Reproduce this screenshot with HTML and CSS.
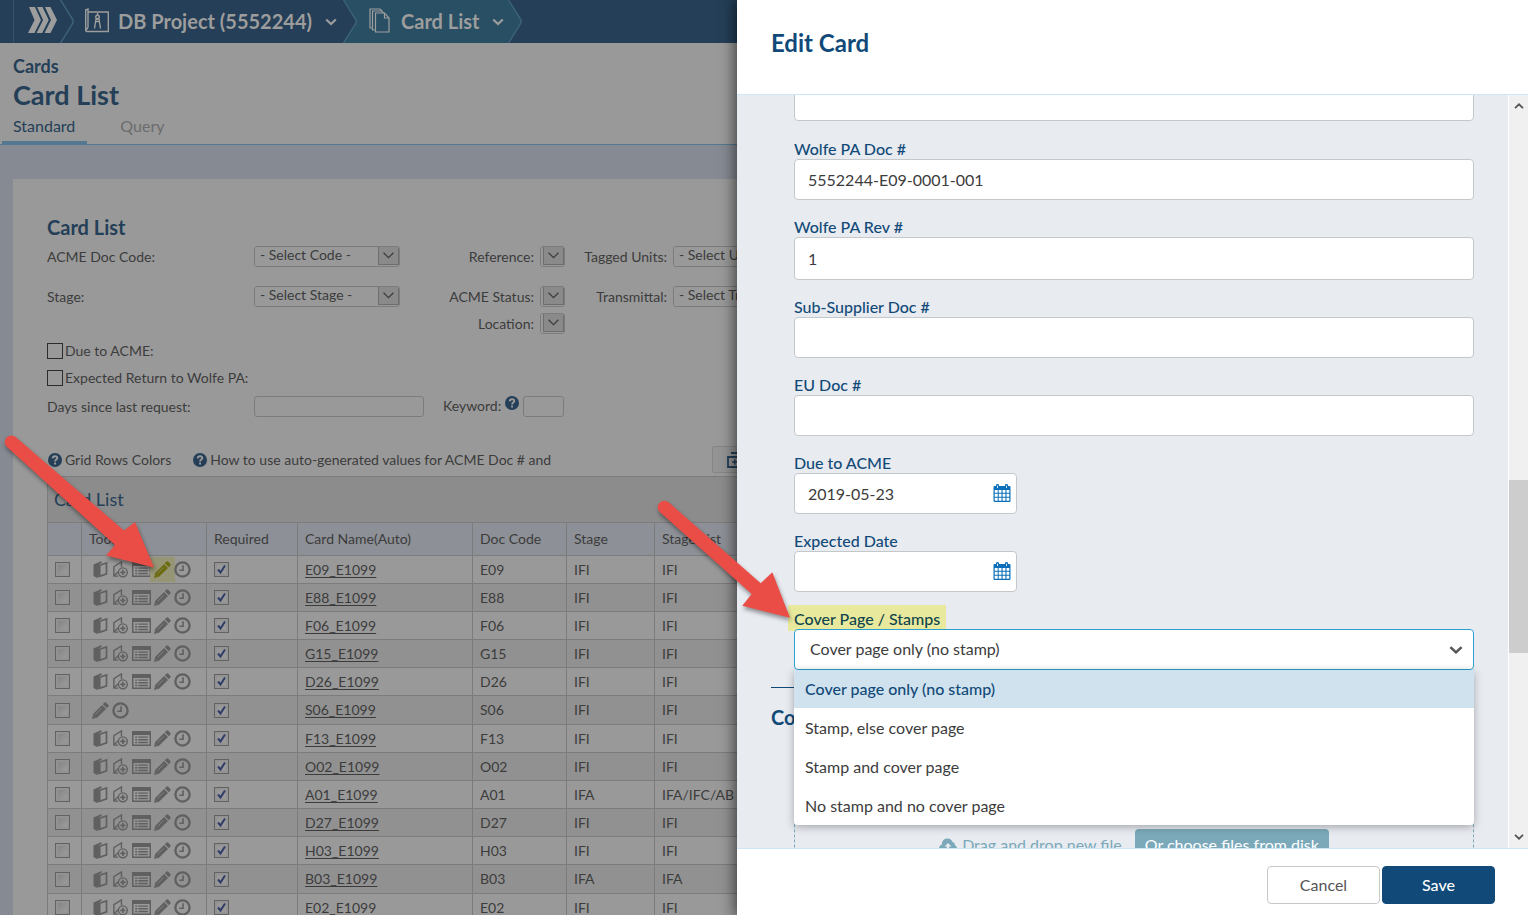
FILE: index.html
```html
<!DOCTYPE html>
<html lang="en">
<head>
<meta charset="utf-8">
<title>Card List</title>
<link rel="stylesheet" href="styles.css">
</head>
<body>
<svg class="symbols" aria-hidden="true">
  <symbol id="i-book" viewBox="0 0 16 17"><path fill="currentColor" d="M1 3.500 9 0v2L6.500 3.200v12.300L4.500 17 1 15z"/><path fill="none" stroke="currentColor" stroke-width="1.700" d="M7.200 4.200 14 2v10.800L7.200 15.300z"/></symbol>
  <symbol id="i-map" viewBox="0 0 17 18"><path fill="none" stroke="currentColor" stroke-width="1.500" d="M6 16H1.500V6L9.500 1v5.500M1.500 16 6 11.500"/><circle cx="11" cy="12" r="4.700" fill="none" stroke="currentColor" stroke-width="1.500"/><path stroke="currentColor" stroke-width="1.700" d="M11 9.300v5.400M8.300 12h5.400"/></symbol>
  <symbol id="i-list" viewBox="0 0 18 14"><path fill="none" stroke="currentColor" stroke-width="1.400" d="M.7.7h16.600v12.600H.7z"/><path fill="currentColor" d="M0 0h18v3.700H0zM3 5h2v1.400H3zm3 0h9v1.400H6zM3 7.500h2v1.400H3zm3 0h9v1.400H6zM3 10h2v1.400H3zm3 0h9v1.400H6z"/></symbol>
  <symbol id="i-pencil" viewBox="0 0 16 16"><path fill="currentColor" d="M11.500.8q1-1 2 0l1.700 1.700q1 1 0 2L13.900 5.800 10.200 2.100zM9.500 2.800l3.700 3.700-8.500 8.400L0 16l1.100-4.800z"/><path stroke="#999" stroke-width=".5" d="M3.300 11.800 9 6M1.600 13.600l.9.900" fill="none"/></symbol>
  <symbol id="i-clock" viewBox="0 0 16 16"><circle cx="8" cy="8" r="6.700" fill="none" stroke="currentColor" stroke-width="2.200"/><path fill="none" stroke="currentColor" stroke-width="1.500" d="M8.500 4v4.700H5"/></symbol>
  <symbol id="i-help" viewBox="0 0 14 14"><circle cx="7" cy="7" r="7" fill="currentColor"/><path fill="none" stroke="#999" stroke-width="1.900" d="M4.700 5.400C4.800 2.500 9.300 2.600 9.300 5c0 1.500-2.200 1.600-2.200 3.400"/><path fill="#999" d="M6.100 9.500H8v1.900H6.100z"/></symbol>
  <symbol id="i-caret" viewBox="0 0 12 8"><path fill="none" stroke="currentColor" stroke-width="2.200" d="M1.200 1.500 6 6l4.800-4.500"/></symbol>
  <symbol id="i-thin" viewBox="0 0 10 6"><path fill="none" stroke="currentColor" stroke-width="1.100" d="M.5.5 5 5 9.500.5"/></symbol>
  <symbol id="i-cal" viewBox="0 0 18 18"><path fill="#0b70b9" d="M1.500 2H3V1q0-1 1.500-1T6 1v1h6V1q0-1 1.500-1T15 1v1h1.500q1 0 1 1v14q0 1-1 1h-15q-1 0-1-1V3q0-1 1-1z"/><path fill="#fff" d="M1.700 6h3v2.800h-3zm4 0h2.800v2.800H5.700zm3.900 0h2.800v2.800H9.600zm3.900 0h2.800v2.800h-2.800zM1.700 9.800h3v2.900h-3zm4 0h2.800v2.900H5.700zm3.900 0h2.800v2.900H9.600zm3.900 0h2.800v2.900h-2.800zM1.700 13.700h3v3h-3zm4 0h2.800v3H5.700zm3.900 0h2.800v3H9.600zm3.900 0h2.800v3h-2.800z"/><path stroke="#fff" stroke-width=".8" d="M4.500 1.500v2.500M13.500 1.500v2.500"/></symbol>
  <symbol id="i-edge" viewBox="0 0 14 43"><path fill="none" stroke="#3c617a" stroke-width="1.500" d="M.5 0 13 20v3L.5 43"/></symbol>
</svg>

<div class="app">
  <main class="page">
    <nav class="crumbs" aria-label="Breadcrumb">
      <a class="home" href="#" aria-label="Home"><svg width="30" height="27" viewBox="0 0 30 27"><path fill="#9d9d9d" d="M1 0h6l6 13-6.500 13H0L6.500 13zM9 0h5.500l6.500 13-6.500 13h-6l6.500-13zM17 0h5.500L29 13l-6.500 13h-6l6.500-13z"/><path stroke="#243f57" stroke-width="1.200" fill="none" d="M8 0l6 13-6.500 13M15.500 0l6 13L15 26"/></svg></a>
      <a class="crumb project" href="#">
        <svg class="edge"><use href="#i-edge"/></svg>
        <svg class="crumb-icon" width="24" height="25" viewBox="0 0 24 25"><path fill="none" stroke="#9d9d9d" stroke-width="1.400" d="M3 19.500V1L.7 2v20.500q.3 1 1.500 1H23.300V4H3.500M3 19.500 1 22"/><g fill="none" stroke="#9d9d9d" stroke-width="1.400"><circle cx="12.500" cy="9" r="1.800"/><path d="M12.500 5v2.500M11 11 9.500 20.500M14 11l1.500 9.500M10 13.500h5M11 11h3"/></g></svg>
        <span>DB Project (5552244)</span>
        <svg class="caret"><use href="#i-caret"/></svg>
      </a>
      <a class="crumb current" href="#">
        <svg class="edge lead" viewBox="0 0 14 43"><path fill="#243f57" d="M0 0h.5L13 20v3L.5 43H0z"/><use href="#i-edge"/></svg>
        <svg class="crumb-icon" width="21" height="25" viewBox="0 0 21 25"><g fill="#284f64" stroke="#9d9d9d" stroke-width="1.200"><path d="M1 1h10l2 2v17H1z"/><path d="M3.500 3h9l3 3v16h-12z"/><path d="M6.500 5h9l4.500 5v14H6.500z"/><path fill="none" d="M15.500 5v5H20"/></g></svg>
        <span>Card List</span>
        <svg class="caret"><use href="#i-caret"/></svg>
        <svg class="edge tail" viewBox="0 0 14 43"><path fill="#284f64" d="M0 0h.5L13 20v3L.5 43H0z"/><use href="#i-edge"/></svg>
      </a>
    </nav>
    <header class="page-head">
      <p class="kicker">Cards</p>
      <h1>Card List</h1>
      <div class="tabs"><a class="tab active" href="#">Standard</a><a class="tab" href="#">Query</a></div>
    </header>
    <section class="panel">
      <h2>Card List</h2>
      <form class="filters">
        <label class="c1 r1" for="f-code">ACME Doc Code:</label>
        <span class="pick c2 r1"><select id="f-code"><option>- Select Code -</option></select><svg><use href="#i-thin"/></svg></span>
        <label class="c3 r1" for="f-ref">Reference:</label>
        <span class="pick tiny c4 r1"><select id="f-ref"></select><svg><use href="#i-thin"/></svg></span>
        <label class="c5 r1" for="f-units">Tagged Units:</label>
        <span class="pick c6 r1"><select id="f-units"><option>- Select Unit -</option></select><svg><use href="#i-thin"/></svg></span>
        <label class="c1 r2" for="f-stage">Stage:</label>
        <span class="pick c2 r2"><select id="f-stage"><option>- Select Stage -</option></select><svg><use href="#i-thin"/></svg></span>
        <label class="c3 r2" for="f-status">ACME Status:</label>
        <span class="pick tiny c4 r2"><select id="f-status"></select><svg><use href="#i-thin"/></svg></span>
        <label class="c5 r2" for="f-trans">Transmittal:</label>
        <span class="pick c6 r2"><select id="f-trans"><option>- Select Transmittal -</option></select><svg><use href="#i-thin"/></svg></span>
        <label class="c3 r3" for="f-loc">Location:</label>
        <span class="pick tiny c4 r3"><select id="f-loc"></select><svg><use href="#i-thin"/></svg></span>
        <label class="tick r4"><input type="checkbox">Due to ACME:</label>
        <label class="tick r5"><input type="checkbox">Expected Return to Wolfe PA:</label>
        <label class="c1 r6" for="f-days">Days since last request:</label>
        <input class="c2 r6" id="f-days" type="text">
        <span class="keyword r6"><label for="f-key">Keyword:</label><svg class="help"><use href="#i-help"/></svg><input id="f-key" type="text"></span>
      </form>
      <div class="links">
        <a href="#"><svg class="help"><use href="#i-help"/></svg>Grid Rows Colors</a>
        <a class="howto" href="#"><svg class="help"><use href="#i-help"/></svg>How to use auto-generated values for ACME Doc # and W</a>
        <button class="add" type="button" aria-label="Add cards"><svg width="18" height="18" viewBox="0 0 18 18"><path fill="none" stroke="#243f57" stroke-width="1.800" d="M4 2h11M1 6h15v10H1z"/><path stroke="#243f57" stroke-width="1.500" d="M5 11h5.500M7.800 8.200v5.500"/></svg></button>
      </div>
      <div class="grid">
        <h3>Card List</h3>
        <table>
          <colgroup><col class="w-check"><col class="w-tools"><col class="w-req"><col class="w-name"><col class="w-code"><col class="w-stage"><col class="w-list"></colgroup>
          <thead><tr><th></th><th>Tools</th><th>Required</th><th>Card Name(Auto)</th><th>Doc Code</th><th>Stage</th><th>Stage List</th></tr></thead>
          <tbody id="rows"></tbody>
        </table>
      </div>
    </section>
  </main>

  <aside class="drawer" aria-label="Edit Card">
    <header class="drawer-head"><h2>Edit Card</h2></header>
    <div class="drawer-body">
      <form class="fields">
        <div class="field first"><input type="text" aria-label="Reference"></div>
        <div class="field"><label for="doc">Wolfe PA Doc #</label><input id="doc" type="text" value="5552244-E09-0001-001"></div>
        <div class="field tall"><label for="rev">Wolfe PA Rev #</label><input id="rev" type="text" value="1"></div>
        <div class="field"><label for="sub">Sub-Supplier Doc #</label><input id="sub" type="text"></div>
        <div class="field"><label for="eu">EU Doc #</label><input id="eu" type="text"></div>
        <div class="field date"><label for="due">Due to ACME</label><span class="date-box"><input id="due" type="text" value="2019-05-23"><button type="button" aria-label="Pick date"><svg><use href="#i-cal"/></svg></button></span></div>
        <div class="field date"><label for="exp">Expected Date</label><span class="date-box"><input id="exp" type="text"><button type="button" aria-label="Pick date"><svg><use href="#i-cal"/></svg></button></span></div>
        <div class="field cover"><label for="cover">Cover Page / Stamps</label>
          <div class="combo">
            <select id="cover"><option>Cover page only (no stamp)</option></select>
            <svg class="combo-caret"><use href="#i-caret"/></svg>
            <ul class="menu" role="listbox">
              <li class="selected" role="option">Cover page only (no stamp)</li>
              <li role="option">Stamp, else cover page</li>
              <li role="option">Stamp and cover page</li>
              <li role="option">No stamp and no cover page</li>
            </ul>
          </div>
        </div>
        <h3 class="next-section">Co</h3>
        <div class="dropzone">
          <svg width="18" height="15" viewBox="0 0 18 15"><path fill="currentColor" fill-rule="evenodd" d="M4 14q-4-.5-4-4 0-2.500 2.800-3.500Q3 1 8 .5q4-.5 5.500 3.500 2.500 0 2.300 3Q18 8 18 10.500 17.500 14 14 14zM9 5 5.500 8.500h2.300V12h2.400V8.500h2.300z"/></svg>
          <span>Drag and drop new file</span>
          <button type="button">Or choose files from disk</button>
        </div>
      </form>
      <div class="scrollbar" aria-hidden="true">
        <svg class="up"><use href="#i-caret"/></svg>
        <div class="track"><div class="thumb"></div></div>
        <svg><use href="#i-caret"/></svg>
      </div>
    </div>
    <footer class="drawer-foot"><button class="btn" type="button">Cancel</button><button class="btn primary" type="submit">Save</button></footer>
  </aside>

  <svg class="arrow arrow-edit" width="170" height="150" viewBox="0 430 170 150"><path d="M15.600 437 124 530.500 135 522 154 567.500 106 555.500 115 545 7 447A6.500 6.500 0 0 1 15.600 437z"/></svg>
  <svg class="arrow arrow-cover" width="150" height="140" viewBox="650 495 150 140"><path d="M668.600 502.300 760.700 583.300 772.300 572.300 790 617.700 742.300 605.700 751.700 594 660 512.300A6.500 6.500 0 0 1 668.600 502.300z"/></svg>
</div>
<script src="app.js"></script>
</body>
</html>
```

FILE: styles.css
```css
* { box-sizing: border-box; }
body { margin: 0; font-family: Lato, "Liberation Sans", sans-serif; font-size: 14px; color: #3c3c3c; }
h1, h2, h3, p, ul { margin: 0; padding: 0; }
a { color: inherit; text-decoration: none; }
input, select, button { font: inherit; color: inherit; margin: 0; }
svg { display: block; flex: none; }
.symbols { position: absolute; width: 0; height: 0; }

.app { position: relative; display: grid; grid-template-columns: 737fr 791fr; height: 100vh; overflow: hidden; }
.page { min-width: 0; height: 100vh; overflow: hidden; background: #868a92; }

/* breadcrumb */
.crumbs { display: flex; height: 43px; padding-left: 13px; background: #243f57; color: #9d9d9d; font-size: 20px; font-weight: 700; }
.home { display: flex; align-items: center; width: 47px; padding: 0 0 2px 14px; border-left: 1px solid #36536b; }
.crumb { display: flex; align-items: center; }
.crumb span { padding-bottom: 2px; }
.project { padding-right: 6px; }
.project .edge { margin-right: 11px; }
.crumb-icon { margin-right: 11px; margin-bottom: 2px; }
.project .crumb-icon { margin-right: 9px; }
.caret { width: 12px; height: 8px; margin-left: 13px; }
.edge { width: 14px; height: 43px; }
.current { background: #284f64; }
.current .lead { margin-right: 12px; }
.current .tail { margin-left: 4px; background: #243f57; }

/* heading */
.page-head { background: #999; border-bottom: 1px solid #54788f; padding-left: 13px; color: #243f57; font-weight: 700; }
.kicker { font-size: 18px; line-height: 22px; padding-top: 12px; }
h1 { font-size: 27px; line-height: 36px; }
.tabs { display: flex; gap: 22px; margin-left: -11px; font-size: 16px; font-weight: 400; }
.tab { height: 31px; padding: 0 12px 0 11px; line-height: 25px; color: #6c6c6c; }
.tab.active { color: #243f57; border-bottom: 3px solid #54788f; }

/* card list panel */
.panel { margin: 34px 0 0 13px; padding: 36px 0 0 34px; background: #999; overflow: hidden; }
.panel h2 { font-size: 20px; line-height: 24px; color: #243f57; }
.filters { display: grid; grid-template-columns: 207px 170px 110px 32px 101px 180px; grid-template-rows: 40px 27px 27px 27px 29px 21px; margin-top: 7px; line-height: 21px; align-items: start; }
.c1 { grid-column: 1; } .c2 { grid-column: 2; } .c3 { grid-column: 3; } .c4 { grid-column: 4; } .c5 { grid-column: 5; } .c6 { grid-column: 6; }
.r1 { grid-row: 1; } .r2 { grid-row: 2; } .r3 { grid-row: 3; } .r4 { grid-row: 4; } .r5 { grid-row: 5; } .r6 { grid-row: 6; }
.c3, .c5 { text-align: right; }
.c4, .c6 { margin-left: 6px; }
.filters input[type="text"] { width: 170px; height: 21px; padding: 0 4px; border: 1px solid #7c7c7c; border-radius: 3px; background: #999; }
.pick { display: flex; position: relative; width: 146px; height: 21px; border: 1px solid #7c7c7c; border-radius: 3px; overflow: hidden; }
.pick select { flex: 1; min-width: 0; appearance: none; border: 0; padding: 0 24px 3px 5px; background: #999; line-height: 16px; }
.pick svg { position: absolute; right: 0; top: 0; width: 21px; height: 18px; padding: 5px 4px; background: #8a8a8a; border: 1px solid #6e6e6e; border-top: 0; color: #3c3c3c; }
.pick.tiny { width: 25px; }
.pick.tiny select { padding: 0; }
.tick { grid-column: 1 / 3; display: flex; align-items: center; gap: 2px; }
.tick input { appearance: none; width: 16px; height: 16px; border: 1px solid #2c2c2c; }
.help { width: 14px; height: 14px; color: #243f57; }
.keyword { grid-column: 3 / 5; display: flex; gap: 4px; padding-left: 19px; line-height: 20px; }
.filters .keyword input { width: 41px; }
.links { display: flex; align-items: center; height: 27px; margin-top: 29px; }
.links a { display: flex; flex: none; align-items: center; gap: 3px; white-space: nowrap; margin-left: 1px; }
.links .howto { width: 362px; margin-left: 22px; overflow: hidden; }
.add { width: 60px; height: 27px; margin-left: 157px; padding: 0 14px; border: 1px solid #868686; border-radius: 2px; background: #949494; flex: none; }

.grid { width: 900px; margin-top: 3px; border: 1px solid #7c7c7c; }
.grid h3 { height: 45px; padding-left: 6px; font-size: 18px; font-weight: 400; line-height: 45px; color: #243f57; background: #8c8c8c; }
table { width: 100%; table-layout: fixed; border-collapse: separate; border-spacing: 0; }
.w-check { width: 34px; } .w-tools { width: 125px; } .w-req { width: 91px; } .w-name { width: 175px; } .w-code { width: 94px; } .w-stage { width: 88px; }
th, td { padding: 0 7px; text-align: left; font-weight: 400; border-right: 1px solid #7c7c7c; border-bottom: 1px solid #7c7c7c; }
th { height: 34px; padding-bottom: 2px; background: #8d9096; border-top: 1px solid #7c7c7c; }
td { height: 28px; line-height: 20px; }
tbody tr:nth-child(even) { background: #919191; }
tbody tr:nth-child(6n) td { height: 29px; }
td a { text-decoration: underline; text-underline-offset: 2px; text-decoration-skip-ink: none; }
td input { appearance: none; display: block; width: 15px; height: 15px; border: 1px solid #626262; background: linear-gradient(135deg, #808080, #a0a0a0); box-shadow: inset 0 0 0 2px #929292; }
td input:checked { background: #999 url("data:image/svg+xml,%3Csvg xmlns='http://www.w3.org/2000/svg' viewBox='0 0 13 13'%3E%3Cpath d='M3 6.500 5.500 9.500 10 2.500' fill='none' stroke='%23303c68' stroke-width='2'/%3E%3C/svg%3E"); }
.tools { display: flex; align-items: center; gap: 3px; padding-left: 3px; color: #606060; }
.tools svg { width: 17px; height: 17px; }
.tools .list { width: 19px; height: 15px; }
.tools .marked { color: #6d6b10; background: #969576; box-shadow: 0 0 0 4px #969576; }

/* drawer */
.drawer { position: relative; display: flex; flex-direction: column; min-width: 0; height: 100vh; background: #fff; box-shadow: 0 0 14px 2px rgba(0, 0, 0, .6); font-size: 16px; }
.drawer-head { padding: 29px 34px; border-bottom: 1px solid #cfe6f7; color: #114a78; }
.drawer-head h2 { font-size: 24px; line-height: 28px; padding-bottom: 8px; }
.drawer-body { display: flex; flex: 1; min-height: 0; overflow: hidden; background: #e8ebf0; }
.fields { flex: 1; min-width: 0; padding: 0 34px 0 57px; }
.field { margin-bottom: 17px; }
.field.first { margin: -15px 0 18px; }
.field label { display: block; width: max-content; line-height: 20px; font-weight: 500; color: #114a78; }
.field input, .field select { display: block; width: 100%; height: 41px; padding: 0 13px; border: 1px solid #c5c8cb; border-radius: 4px; background: #fff; color: #3c3c3c; }
.field.tall input { height: 43px; padding-bottom: 1px; }
.date-box { display: block; position: relative; width: 223px; }
.date-box button { position: absolute; right: 6px; top: 11px; padding: 0; border: 0; background: none; }
.date-box svg { width: 18px; height: 18px; }
.field.cover label { margin: -4px 0 -2px -6px; padding: 4px 6px 2px; background: #e8e99d; color: #10454c; }
.combo { position: relative; }
.field.cover select { appearance: none; padding: 0 15px 2px; border-color: #2b9fd0; }
.combo-caret { position: absolute; right: 11px; top: 16px; width: 14px; height: 10px; color: #555; }
.menu { position: absolute; left: 0; right: 0; top: 41px; display: grid; gap: 1px; list-style: none; background: #fff; border-radius: 0 0 4px 4px; box-shadow: 0 2px 8px rgba(0, 0, 0, .3); }
.menu li { padding: 0 11px; line-height: 38px; }
.menu .selected { background: #d1e2ef; color: #114a78; font-weight: 500; }
.next-section { margin-left: -23px; padding-top: 17px; border-top: 1px solid #114a78; font-size: 20px; line-height: 24px; color: #114a78; }
.dropzone { display: flex; justify-content: center; align-items: center; margin-top: 60px; padding: 39px 0; border: 1px dashed #7ba9b9; color: #7ba9b9; line-height: 20px; }
.dropzone svg { margin-bottom: 2px; }
.dropzone span { margin: 0 13px 2px 5px; }
.dropzone button { height: 34px; padding: 0 10px 2px; border: 0; border-radius: 4px; background: #7ba9b9; color: #fff; }
.scrollbar { display: flex; flex-direction: column; align-items: center; width: 20px; padding: 7px 0; border-left: 1px solid #fff; background: #f0f0f0; color: #555; }
.scrollbar svg { width: 10px; height: 8px; }
.scrollbar .up { transform: rotate(180deg); }
.track { flex: 1; width: 100%; display: grid; grid-template-rows: 370fr 173fr 180fr; }
.thumb { grid-row: 2; background: #cdcdcd; }
.drawer-foot { display: flex; justify-content: flex-end; gap: 2px; padding: 17px 33px 11px; border-top: 1px solid #cfe6f7; }
.btn { width: 113px; height: 38px; padding: 0 0 2px; border: 1px solid #c8c8c8; border-radius: 4px; background: #fff; color: #555; }
.btn.primary { border-color: #114a78; background: #114a78; color: #fff; font-weight: 500; }

/* callout arrows */
.arrow { position: absolute; fill: #ea4d45; filter: drop-shadow(1px 3px 2px rgba(0, 0, 0, .4)); pointer-events: none; }
.arrow-edit { left: 0; top: 430px; }
.arrow-cover { left: 650px; top: 495px; }
```

FILE: app.js
```javascript
const cards = [
  ["E09", "IFI", "IFI"], ["E88", "IFI", "IFI"], ["F06", "IFI", "IFI"], ["G15", "IFI", "IFI"],
  ["D26", "IFI", "IFI"], ["S06", "IFI", "IFI"], ["F13", "IFI", "IFI"], ["O02", "IFI", "IFI"],
  ["A01", "IFA", "IFA/IFC/AB"], ["D27", "IFI", "IFI"], ["H03", "IFI", "IFI"], ["B03", "IFA", "IFA"],
  ["E02", "IFI", "IFI"]
];
const icon = (name, cls = "") => `<svg class="${cls}"><use href="#i-${name}"/></svg>`;

document.getElementById("rows").innerHTML = cards.map(([code, stage, list], i) => {
  const files = code === "S06" ? "" : icon("book") + icon("map") + icon("list", "list");
  return `<tr>
    <td><input type="checkbox" aria-label="Select ${code}"></td>
    <td><div class="tools">${files}${icon("pencil", i === 0 ? "marked" : "")}${icon("clock")}</div></td>
    <td><input type="checkbox" checked aria-label="Required ${code}"></td>
    <td><a href="#">${code}_E1099</a></td><td>${code}</td><td>${stage}</td><td>${list}</td>
  </tr>`;
}).join("");
```
